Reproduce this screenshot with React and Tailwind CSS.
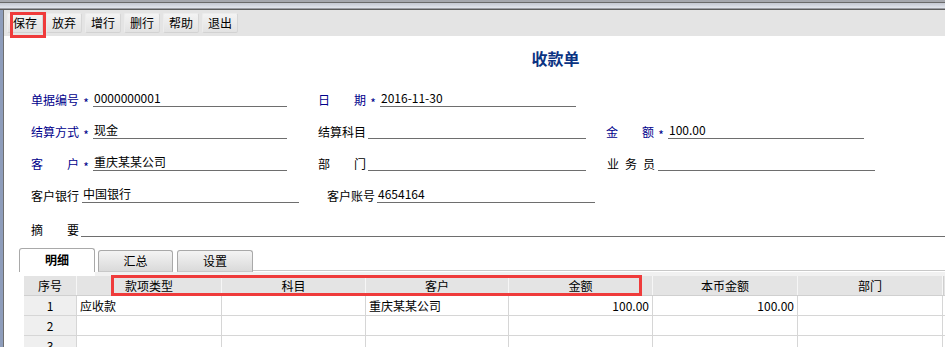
const FONT = { fontFamily: '"Noto Sans CJK SC", "Liberation Sans", sans-serif' };

const buttons = ['保存', '放弃', '增行', '删行', '帮助', '退出'];

function Label({ text, blue }) {
  const chars = text.split(' ');
  return (
    <span
      className={`flex w-[48px] shrink-0 justify-between leading-[14px] ${blue ? 'text-[#00008b]' : 'text-black'}`}
    >
      {chars.length > 1 ? chars.map((c, i) => <span key={i}>{c}</span>) : <span>{text}</span>}
    </span>
  );
}

function Field({ label, blue, star, value, gap = 2, className = '' }) {
  return (
    <div className={`flex items-end ${className}`}>
      <Label text={label} blue={blue} />
      {star ? (
        <span className="w-[14px] shrink-0 text-center leading-[12px] translate-y-[2px] text-[#00008b]">*</span>
      ) : (
        <span style={{ width: gap }} className="shrink-0" />
      )}
      <div className="flex-1 h-[16px] border-b border-[#6e6e6e] leading-[14px] pl-px text-black">
        {value}
      </div>
    </div>
  );
}

const cols = [
  { title: '序号', w: 'w-[53px]' },
  { title: '款项类型', w: 'w-[145px]' },
  { title: '科目', w: 'w-[144px]' },
  { title: '客户', w: 'w-[143px]' },
  { title: '金额', w: 'w-[144px]' },
  { title: '本币金额', w: 'w-[145px]' },
  { title: '部门', w: 'w-[145px]' },
];

const rows = [
  ['1', '应收款', '', '重庆某某公司', '100.00', '100.00', ''],
  ['2', '', '', '', '', '', ''],
  ['3', '', '', '', '', '', ''],
];

export default function App() {
  return (
    <div style={FONT} className="w-[945px] h-[347px] overflow-hidden bg-white text-[12px] text-black">
      {/* title bar edge */}
      <div className="h-[2px] bg-[#a6a8ae]" />
      <div className="h-px bg-[#6a6a6a]" />
      <div className="h-[5px] bg-linear-to-b from-[#c4c8d2] to-[#e2e5ec]" />
      <div className="h-px bg-[#9b9da4]" />
      <div className="h-px bg-[#5c5c5c]" />

      <div className="flex">
        <div className="w-[4px] shrink-0 bg-[#8e9dbb] border-r border-[#6f6f6f]" />
        <div className="flex-1 flex flex-col">
          {/* toolbar */}
          <div className="relative h-[26px] bg-[#e4e4e4] flex items-center pl-[3px] gap-[3px]">
            {buttons.map(b => (
              <div
                key={b}
                className="w-[36px] h-[20px] flex items-center justify-center rounded-[2px] bg-linear-to-b from-[#f3f3f3] to-[#e2e2e2] border border-[#ececec] border-b-[#d2d2d2] border-r-[#d6d6d6] leading-none"
              >
                {b}
              </div>
            ))}
            <div className="absolute left-[6px] top-[2px] w-[36px] h-[26px] border-[3px] border-[#ef3b3b]" />
          </div>

          {/* title */}
          <div className="pt-[12px] h-[39px] text-center pl-[162px]">
            <span className="text-[16px] font-bold leading-[20px] text-[#0b3382]">收款单</span>
          </div>

          {/* form */}
          <div className="pl-[27px]">
            <div className="flex items-end h-[32px]">
              <Field className="w-[256px]" label="单据编号" blue star value="0000000001" />
              <Field className="w-[258px] ml-[31px]" label="日 期" blue star value="2016-11-30" />
            </div>
            <div className="flex items-end h-[32px]">
              <Field className="w-[256px]" label="结算方式" blue star value="现金" />
              <Field className="w-[268px] ml-[31px]" label="结算科目" />
              <Field className="w-[258px] ml-[20px]" label="金 额" blue star value="100.00" />
            </div>
            <div className="flex items-end h-[32px]">
              <Field className="w-[256px]" label="客 户" blue star value="重庆某某公司" />
              <Field className="w-[268px] ml-[31px]" label="部 门" />
              <Field className="w-[268px] ml-[21px]" label="业 务 员" gap={3} />
            </div>
            <div className="flex items-end h-[32px]">
              <Field className="w-[268px]" label="客户银行" gap={3} value="中国银行" />
              <Field className="w-[268px] ml-[28px]" label="客户账号" gap={2} value="4654164" />
            </div>
            <div className="flex items-end h-[34px]">
              <Field className="flex-1" label="摘 要" gap={2} />
            </div>
          </div>

          {/* tabs */}
          <div className="mt-[11px] pl-[15px] flex items-end h-[24px]">
            <div className="w-[76px] h-[24px] bg-white border border-b-0 border-[#a9a9a9] rounded-t-[3px] flex items-center justify-center font-bold pb-[2px]">
              明细
            </div>
            <div className="ml-[3px] w-[75px] h-[22px] bg-linear-to-b from-[#f4f4f4] to-[#dadada] border border-[#a9a9a9] border-b-[#c8c8c8] rounded-t-[3px] flex items-center justify-center">
              汇总
            </div>
            <div className="ml-[4px] w-[76px] h-[22px] bg-linear-to-b from-[#f4f4f4] to-[#dadada] border border-[#a9a9a9] border-b-[#c8c8c8] rounded-t-[3px] flex items-center justify-center">
              设置
            </div>
            <div className="flex-1 h-px bg-[#c8c8c8] mb-px" />
          </div>

          {/* grid */}
          <div className="pl-[20px]">
            <div className="h-[4px] bg-[#f1f1f1] ml-[71px]" />
            <div className="relative">
              <div className="flex h-[20px] bg-[#e4e4e4] border-b border-[#d0d0d0]">
                {cols.map(c => (
                  <div
                    key={c.title}
                    className={`${c.w} shrink-0 h-full flex items-center justify-center border-r border-[#f6f6f6] leading-none`}
                  >
                    {c.title}
                  </div>
                ))}
                <div className="flex-1 border-l border-[#cfcfcf]" />
              </div>
              {rows.map((r, ri) => (
                <div key={ri} className="flex h-[20px] border-b border-[#d6d6d6]">
                  {r.map((v, ci) => (
                    <div
                      key={ci}
                      className={`${cols[ci].w} shrink-0 h-full flex items-center border-r border-[#d6d6d6] leading-none ${
                        ci === 0
                          ? 'justify-center bg-[#efefef]'
                          : ci === 4 || ci === 5
                          ? 'justify-end pr-[3px]'
                          : 'pl-[3px]'
                      }`}
                    >
                      {v}
                    </div>
                  ))}
                  <div className="flex-1" />
                </div>
              ))}
              <div className="absolute left-[87px] top-[-1px] w-[531px] h-[21px] border-[3px] border-[#ef3b3b]" />
            </div>
          </div>
        </div>
      </div>
    </div>
  );
}
